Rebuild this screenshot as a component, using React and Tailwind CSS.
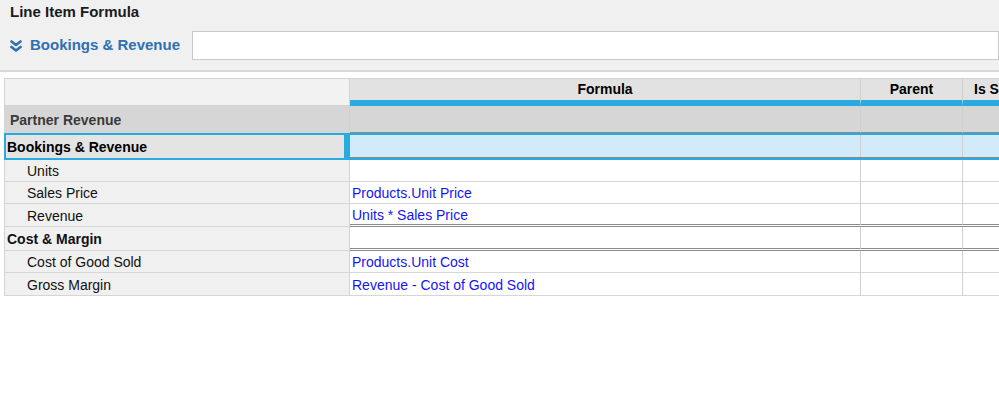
import React from "react";

const F = { fontFamily: '"Liberation Sans", Arial, sans-serif' };

function Chevrons() {
  return (
    <svg width="12" height="12" viewBox="0 0 12 12" className="shrink-0">
      <path d="M1.5 1.5 L6 5 L10.5 1.5" fill="none" stroke="#2f6fb3" strokeWidth="2.6" strokeLinecap="round" strokeLinejoin="round" />
      <path d="M1.5 7 L6 10.5 L10.5 7" fill="none" stroke="#2f6fb3" strokeWidth="2.6" strokeLinecap="round" strokeLinejoin="round" />
    </svg>
  );
}

function DataRow({ label, formula, child, h = "h-[22px]", dbl = false, bold = false }) {
  const fb = dbl ? "border-b-[3px] border-double border-b-[#8c8c8c]" : "border-b border-b-[#d6d6d6]";
  return (
    <div className={`flex ${h}`}>
      <div className={`w-[345px] shrink-0 bg-[#f0f0f0] border-r border-r-[#d4d4d4] border-b border-b-[#d6d6d6] flex items-center pt-[2px] text-[14px] text-[#111] ${child ? "pl-[22px]" : "pl-[2px]"} ${bold ? "font-bold" : ""}`}>
        {label}
      </div>
      <div className={`w-[511px] shrink-0 bg-white border-r border-r-[#d0d0d0] ${fb} flex items-center pt-[2px] pl-[2px] text-[14px] text-[#1515f0]`}>
        {formula}
      </div>
      <div className={`w-[102px] shrink-0 bg-white border-r border-r-[#d0d0d0] ${fb}`}></div>
      <div className={`w-[150px] shrink-0 bg-white ${fb}`}></div>
    </div>
  );
}

export default function App() {
  return (
    <div className="w-[999px] h-[408px] overflow-hidden bg-white" style={F}>
      <div className="h-[72px] bg-[#f0f0f0] border-b-2 border-b-[#d9d9d9] pl-[10px] pt-[3px]">
        <div className="text-[15px] font-bold text-[#1a1a1a] leading-[17px]">Line Item Formula</div>
        <div className="flex items-center mt-[11px]">
          <Chevrons />
          <div className="ml-[8px] text-[15px] font-bold text-[#2f6fb3] whitespace-nowrap">Bookings &amp; Revenue</div>
          <div className="ml-[12px] h-[29px] flex-1 bg-white border border-[#c9c9c9]"></div>
        </div>
      </div>
      <div className="mt-[6px] ml-[4px] border-l border-l-[#d4d4d4] border-t border-t-[#d4d4d4] w-[1200px]">
        {/* header */}
        <div className="flex h-[27px]">
          <div className="w-[345px] shrink-0 bg-[#f2f2f2] border-r border-r-[#d4d4d4] border-b border-b-[#d4d4d4]"></div>
          <div className="w-[511px] shrink-0 bg-[#e2e2e2] border-r border-r-[#d0d0d0] border-b-[6px] border-b-[#29abe2] flex items-center justify-center text-[14px] font-bold text-black">Formula</div>
          <div className="w-[102px] shrink-0 bg-[#e2e2e2] border-r border-r-[#d0d0d0] border-b-[6px] border-b-[#29abe2] flex items-center justify-center text-[14px] font-bold text-black">Parent</div>
          <div className="w-[150px] shrink-0 bg-[#e2e2e2] border-b-[6px] border-b-[#29abe2] flex items-center pl-[11px] text-[14px] font-bold text-black">Is Summary</div>
        </div>
        {/* partner revenue */}
        <div className="flex h-[27px] bg-[#d6d6d6]">
          <div className="w-[345px] shrink-0 border-r border-r-[#cfcfcf] flex items-center pt-[2px] pl-[5px] text-[14px] font-bold text-[#3a3a3a]">Partner Revenue</div>
          <div className="w-[511px] shrink-0 border-r border-r-[#cfcfcf] border-b border-b-[#8a8a8a]"></div>
          <div className="w-[102px] shrink-0 border-r border-r-[#cfcfcf] border-b border-b-[#8a8a8a]"></div>
          <div className="w-[150px] shrink-0 border-b border-b-[#8a8a8a]"></div>
        </div>
        {/* bookings selected */}
        <div className="flex h-[27px] -ml-px">
          <div className="w-[342px] shrink-0 bg-[#e4e4e4] border-2 border-[#29abe2] flex items-center pt-[1px] pl-[1px] text-[14px] font-bold text-black">Bookings &amp; Revenue</div>
          <div className="w-[4px] shrink-0 bg-[#29abe2]"></div>
          <div className="flex-1 flex flex-col">
            <div className="h-[2px] bg-[#29abe2]"></div>
            <div className="flex flex-1 bg-[#d2ebfb]">
              <div className="w-[511px] shrink-0 border-r border-r-[#cfcfcf]"></div>
              <div className="w-[102px] shrink-0 border-r border-r-[#cfcfcf]"></div>
              <div className="flex-1"></div>
            </div>
            <div className="h-px bg-[#8a8a8a]"></div>
            <div className="h-[2px] bg-[#29abe2]"></div>
          </div>
        </div>
        <DataRow label="Units" formula="" child />
        <DataRow label="Sales Price" formula="Products.Unit Price" child />
        <DataRow label="Revenue" formula="Units * Sales Price" child h="h-[23px]" dbl />
        <DataRow label="Cost & Margin" formula="" bold h="h-[24px]" dbl />
        <DataRow label="Cost of Good Sold" formula="Products.Unit Cost" child />
        <DataRow label="Gross Margin" formula="Revenue - Cost of Good Sold" child h="h-[23px]" />
      </div>
    </div>
  );
}
